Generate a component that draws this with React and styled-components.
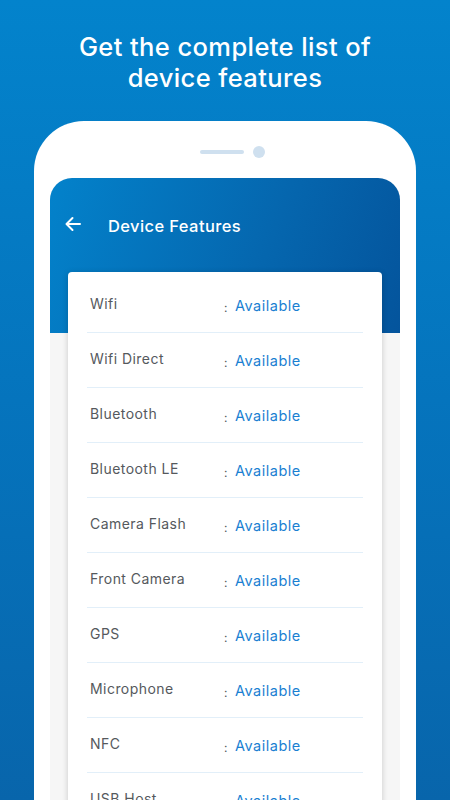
import React from "react";
import styled, { createGlobalStyle } from "styled-components";

const GlobalStyle = createGlobalStyle`
    html, body {
        margin: 0;
        padding: 0;
        height: 100%;
        overflow: hidden;
    }
    body {
        font-family: Inter, "Open Sans", sans-serif;
    }
`;

const features = [
    "Wifi",
    "Wifi Direct",
    "Bluetooth",
    "Bluetooth LE",
    "Camera Flash",
    "Front Camera",
    "GPS",
    "Microphone",
    "NFC",
    "USB Host",
];

const Page = styled.div`
    width: 450px;
    height: 800px;
    overflow: hidden;
    background: linear-gradient(180deg, #0383cc 0%, #0574bd 50%, #0865ab 100%);
    display: flex;
    flex-direction: column;
    align-items: center;
`;

const Headline = styled.h1`
    margin: 31px 0 0;
    color: #ffffff;
    font-size: 25.5px;
    font-weight: 500;
    line-height: 31px;
    text-align: center;
    letter-spacing: 0.4px;
`;

const Phone = styled.div`
    margin-top: 28px;
    width: 382px;
    flex: 1;
    background: #ffffff;
    border-radius: 50px 50px 0 0;
    padding: 0 16px;
    box-sizing: border-box;
    display: flex;
    flex-direction: column;
`;

const Notch = styled.div`
    height: 57px;
    display: flex;
    align-items: center;
    justify-content: center;
    gap: 9px;
    padding-left: 15px;
    padding-top: 4px;
    box-sizing: border-box;
`;

const Speaker = styled.span`
    width: 44px;
    height: 4px;
    border-radius: 2px;
    background: #cfe0ef;
`;

const Camera = styled.span`
    width: 12px;
    height: 12px;
    border-radius: 50%;
    background: #cfe0ef;
`;

const Screen = styled.div`
    flex: 1;
    border-radius: 22px 22px 0 0;
    overflow: hidden;
    background: #f6f6f6;
    position: relative;
`;

const AppBar = styled.div`
    height: 155px;
    background: linear-gradient(110deg, #0382cb 0%, #0566ae 60%, #04549c 100%);
    display: flex;
    align-items: flex-start;
    padding: 37px 0 0 14px;
    box-sizing: border-box;
    gap: 26px;
`;

const BackButton = styled.span`
    display: flex;
    width: 18px;
    height: 18px;
`;

const Title = styled.div`
    color: #ffffff;
    font-size: 16.5px;
    font-weight: 500;
    line-height: 20px;
    margin-top: 1px;
    letter-spacing: 0.4px;
`;

const Card = styled.div`
    position: absolute;
    top: 94px;
    left: 18px;
    right: 18px;
    background: #ffffff;
    border-radius: 4px;
    box-shadow: 0 1px 6px rgba(0, 0, 0, 0.18);
    padding: 6px 19px 0;
`;

const Row = styled.div`
    display: flex;
    align-items: flex-start;
    height: 55px;
    padding-top: 16px;
    box-sizing: border-box;
    border-bottom: 1px solid #e2eff9;
`;

const Label = styled.span`
    width: 134px;
    padding-left: 3px;
    color: #55595d;
    font-size: 14px;
    line-height: 20px;
    letter-spacing: 0.45px;
`;

const Colon = styled.span`
    width: 11px;
    margin-top: 4px;
    color: #55595d;
    font-size: 12px;
    line-height: 20px;
`;

const Value = styled.span`
    margin-top: 2px;
    color: #1a7fd2;
    font-size: 14.5px;
    line-height: 20px;
    letter-spacing: 0.5px;
`;

const ArrowIcon = () => (
    <svg width="18" height="18" viewBox="0 0 18 18" fill="none">
        <path
            d="M16 9H2.5M8.5 3L2.5 9L8.5 15"
            stroke="#ffffff"
            strokeWidth="2"
            strokeLinecap="round"
            strokeLinejoin="round"
        />
    </svg>
);

export default function App() {
    return (
        <Page>
            <GlobalStyle />
            <Headline>
                Get the complete list of
                <br />
                device features
            </Headline>
            <Phone>
                <Notch>
                    <Speaker />
                    <Camera />
                </Notch>
                <Screen>
                    <AppBar>
                        <BackButton>
                            <ArrowIcon />
                        </BackButton>
                        <Title>Device Features</Title>
                    </AppBar>
                    <Card>
                        {features.map((name) => (
                            <Row key={name}>
                                <Label>{name}</Label>
                                <Colon>:</Colon>
                                <Value>Available</Value>
                            </Row>
                        ))}
                    </Card>
                </Screen>
            </Phone>
        </Page>
    );
}
